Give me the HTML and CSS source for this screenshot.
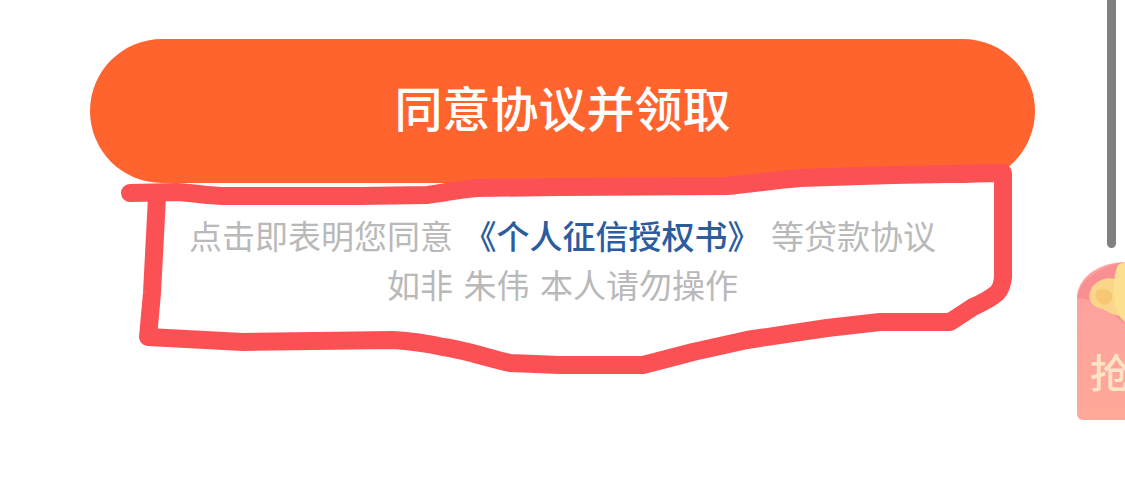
FILE: index.html
```html
<!DOCTYPE html>
<html lang="zh-CN">
<head>
    <meta charset="UTF-8">
    <title>同意协议并领取</title>
    <link rel="stylesheet" href="styles.css">
</head>
<body>

    <div class="container">
        <button type="button" class="agree-btn">同意协议并领取</button>
        <p class="notice">点击即表明您同意 <a class="notice-link">《个人征信授权书》</a> 等贷款协议</p>
        <p class="notice">如非 朱伟 本人请勿操作</p>
    </div>

    <!-- scroll thumb -->
    <div class="scroll-thumb"></div>

    <!-- floating red packet -->
    <div class="packet">
        <svg class="packet-art" width="48" height="158" viewBox="0 0 48 158">
            <path d="M0 36C2 18 24 4 48 0V62L36 52C28 44 12 36 0 36Z" fill="#f98f92"/>
            <path d="M13 30C16 19 30 13 40 18L46 54C38 54 32 51 26 47C17 46 10 39 13 30Z" fill="#fbd58a"/>
            <path d="M19 30C23 25 31 26 35 32C36 40 30 45 25 42C20 40 17 34 19 30Z" fill="#f7c873"/>
            <path d="M41 3C44 1 47 0 48 0V60C43 56 38 49 37 38C36 26 37 11 41 3Z" fill="#fde08f"/>
        </svg>
        <span class="packet-text">抢</span>
    </div>

    <!-- hand drawn marker -->
    <svg class="marker" width="1125" height="489" viewBox="0 0 1125 489">
        <path d="M130 193L177 192C195 193 210 196 227 196L360 196L427 195C445 193 460 189 477 188L560 187L727 186C750 184 775 180 800 178L893 175L1003 173L1003 277Q1002 288 997 293C990 299 982 303 973 307L950 322L880 322L827 328L747 340L693 352L643 365L560 365L510 363C488 358 465 350 443 347C425 343 410 341 393 340L243 342L148 337L152 293L157 197"/>
    </svg>

</body>
</html>
```

FILE: styles.css
```css
/* General Styles */
html, body {
    height: 100%;
}

body {
    margin: 0;
    background-color: #fff;
    font-family: "Noto Sans CJK SC", "Noto Sans", sans-serif;
    overflow: hidden;
}

.container {
    display: flex;
    flex-direction: column;
    align-items: center;
    padding: 39px 90px 0;
}

.agree-btn {
    width: 100%;
    height: 144px;
    margin-bottom: 28px;
    padding: 0 0 11px;
    border: none;
    border-radius: 72px;
    background-color: #ff632e;
    color: #fff;
    font-family: inherit;
    font-size: 48px;
    font-weight: 500;
}

.notice {
    margin: 0;
    color: #b9b9b9;
    font-size: 33px;
    line-height: 49px;
    white-space: pre;
    word-spacing: 3px;
}

.notice-link {
    color: #2c5c9e;
    font-weight: 500;
}

.scroll-thumb {
    position: absolute;
    top: -10px;
    left: 1107px;
    width: 9px;
    height: 258px;
    border-radius: 5px;
    background-color: #808080;
}

.packet {
    position: absolute;
    top: 262px;
    left: 1077px;
    width: 48px;
    height: 158px;
    overflow: hidden;
    border-radius: 48px 0 0 6px / 36px 0 0 6px;
    background: linear-gradient(#fe9fa0, #ffa998);
}

.packet-art {
    display: block;
}

.packet-text {
    position: absolute;
    top: 81px;
    left: 13px;
    color: #fde4c6;
    font-size: 40px;
    font-weight: 500;
    line-height: 56px;
    white-space: nowrap;
}

.marker {
    position: absolute;
    top: 0;
    left: 0;
}

.marker path {
    fill: none;
    stroke: #fb5155;
    stroke-width: 18;
    stroke-linecap: round;
    stroke-linejoin: round;
}
```
